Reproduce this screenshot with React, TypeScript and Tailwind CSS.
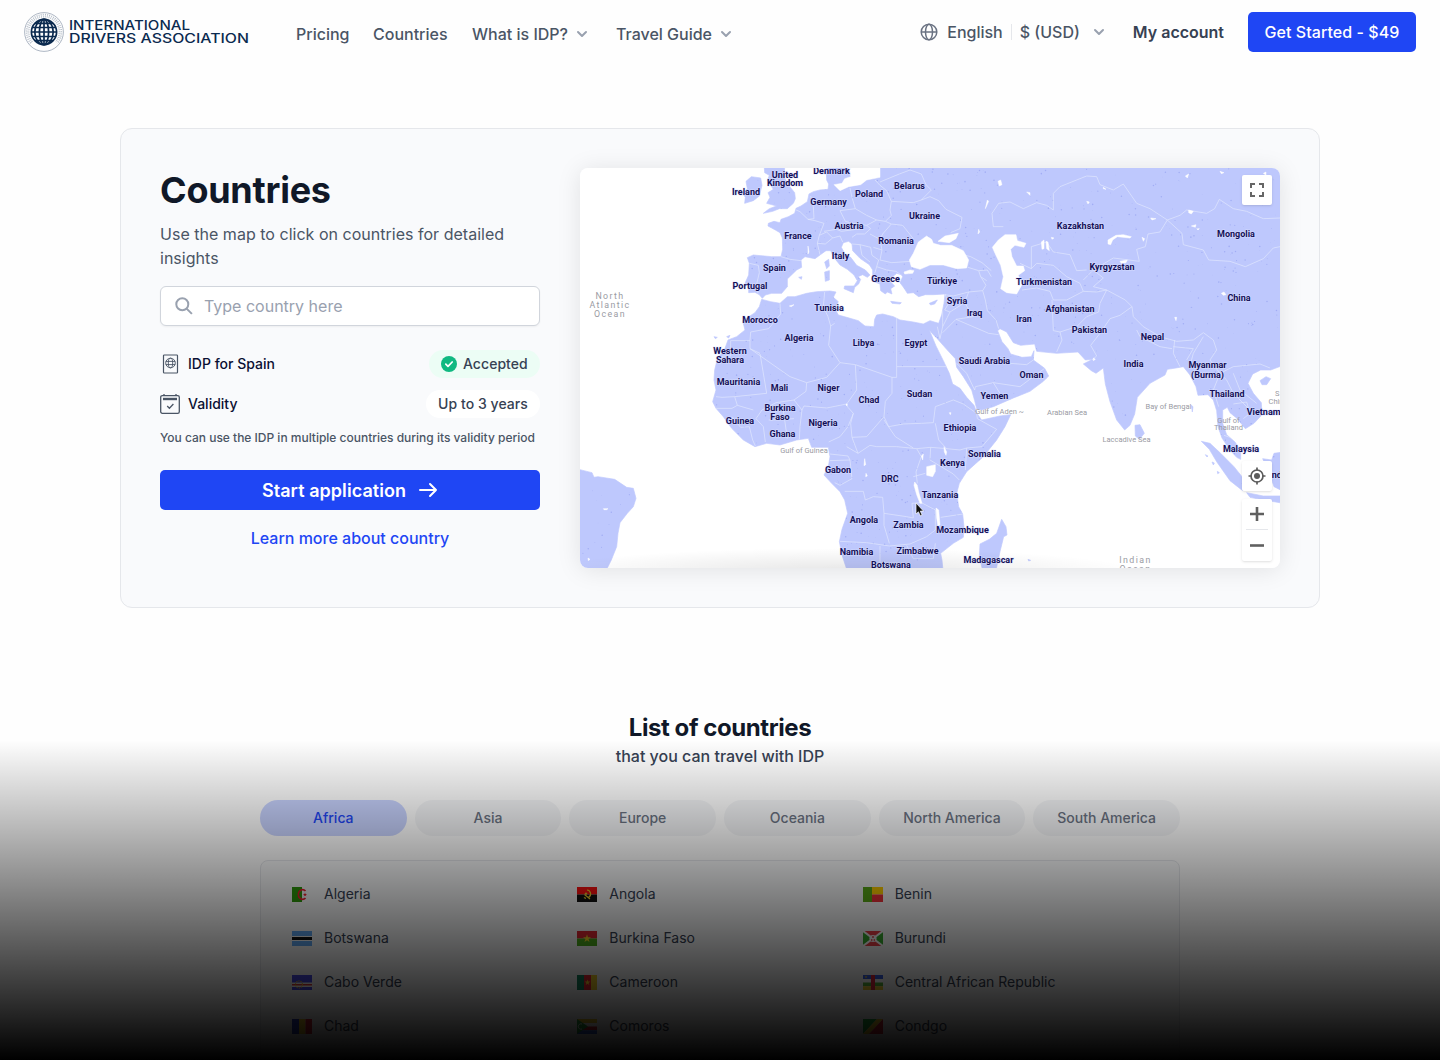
import React from "react";

const LAND = [
  // Eurasia with Africa
  "M378,10 L380,60 386,72 384,88 360,90 340,95 327,102 322,125 303,138 288,145 284,160 265,170 243,178 240,188 222,184 205,190 204,198 226,210 240,218 247,234 248,268 243,290 215,290 160,285 142,293 148,310 146,345 135,370 146,378 146,398 165,397 178,404 187,415 196,405 215,400 245,400 262,380 262,357 290,330 305,322 303,300 315,290 345,296 360,285 378,272 392,272 400,290 420,315 442,328 462,345 472,362 462,378 434,378 432,386 460,398 464,382 476,372 482,358 474,350 488,344 502,352 510,345 496,330 470,316 452,292 436,284 424,262 430,248 446,244 456,252 458,272 480,295 508,314 518,330 518,350 524,366 540,372 542,392 556,402 562,396 576,402 572,386 584,378 570,364 576,352 590,340 604,344 608,350 600,368 612,384 622,400 640,398 656,410 676,404 700,404 735,402 732,430 725,465 716,490 690,482 670,492 640,486 600,480 580,470 548,462 530,465 524,478 522,500 495,498 475,482 440,472 415,465 404,445 415,425 400,412 408,396 390,393 350,395 320,400 285,410 262,410 240,430 212,425 185,418 178,440 165,458 128,482 135,510 110,530 84,540 74,568 52,596 44,630 42,660 48,690 38,725 48,745 70,770 95,805 130,840 165,860 200,850 240,855 290,840 325,835 335,862 385,862 390,890 385,920 372,945 395,970 420,995 434,1020 443,1060 426,1108 418,1145 426,1185 444,1240 730,1240 726,1200 722,1180 760,1150 790,1132 792,1100 788,1062 776,1040 770,1000 778,970 800,935 850,890 890,840 915,800 932,764 900,768 845,780 832,762 822,736 800,712 780,685 758,672 748,640 730,602 708,558 688,510 700,524 712,536 740,568 766,596 770,622 790,650 815,690 824,722 830,746 845,750 880,740 940,714 990,694 1030,664 1046,648 1034,625 1000,600 1002,572 994,590 966,592 932,582 924,566 906,545 893,512 900,506 920,516 940,548 962,556 1004,552 1010,574 1070,580 1134,576 1156,600 1178,598 1150,612 1174,632 1188,640 1210,624 1216,672 1230,725 1250,780 1274,810 1290,796 1304,762 1312,712 1350,670 1395,645 1402,628 1428,624 1450,620 1470,645 1488,680 1494,706 1524,704 1540,720 1550,752 1554,800 1566,834 1590,870 1610,892 1622,898 1622,872 1605,846 1580,824 1568,790 1568,750 1582,742 1590,758 1612,776 1636,806 1662,790 1686,764 1684,728 1660,700 1644,670 1658,642 1682,630 1712,630 1760,612 1760,10 Z",
  // Great Britain and Ireland
  "M192,10 L255,10 252,50 266,76 284,98 286,116 280,130 262,146 238,146 218,154 190,160 208,146 230,138 200,130 210,112 204,98 220,88 212,76 202,62 208,46 194,38 Z",
  "M138,64 L154,50 182,54 186,76 178,108 160,122 134,130 136,112 128,100 142,86 Z",
  // Mediterranean islands
  "M374,306 L386,298 388,318 380,326 Z M374,336 L388,332 388,360 376,364 Z M296,352 L306,350 304,358 Z M572,424 L604,428 600,432 576,430 Z M688,430 L712,420 704,432 692,435 Z",
  // Danish islands
  "M388,52 L402,50 406,66 392,68 Z M410,56 L424,60 416,74 Z",
  // Canary islands
  "M42,530 L52,532 46,536 Z M80,530 L90,526 86,534 Z",
  // Madagascar
  "M905,1078 L918,1100 921,1125 911,1130 900,1175 886,1240 850,1240 838,1190 840,1152 868,1138 890,1120 Z",
  // Sri Lanka
  "M1305,796 L1320,794 1333,820 1318,838 1306,828 Z",
  // Sumatra, Java, Borneo
  "M1504,844 L1530,850 1562,880 1602,920 1626,950 1628,992 1590,962 1550,905 1528,868 Z",
  "M1640,998 L1690,1008 1750,1008 1750,1030 1680,1018 1650,1012 Z",
  "M1688,896 L1715,900 1722,880 1750,876 1750,994 1722,980 1712,950 Z",
  // Hainan and small islands
  "M1680,662 L1698,650 1712,656 1700,674 1686,674 Z",
  "M1516,884 l8,4 -3,3z M1536,906 l7,3 -3,6z M1552,934 l6,4 -5,3z M1474,736 l5,4 -2,16z M984,1198 l8,3 -6,2z",
  // South America
  "M-380,924 L-324,938 -318,952 -306,950 -256,958 -220,982 -200,985 -192,1015 -200,1040 -218,1060 -240,1088 -246,1120 -250,1160 -266,1200 -286,1240 -380,1240 Z",
];

const WATER = [
  // Black Sea, Azov, Marmara
  "M634,320 L628,300 640,280 655,246 680,228 695,238 700,250 722,256 755,256 790,272 806,300 800,324 770,326 730,315 690,315 660,328 Z",
  "M714,244 L735,228 775,220 768,236 748,248 Z M612,336 L630,330 642,332 638,340 614,342 Z",
  // Caspian Sea
  "M885,280 L877,262 895,240 915,224 948,224 952,242 978,250 972,262 945,256 932,268 936,290 950,318 970,318 974,332 955,346 966,374 950,402 920,398 902,386 910,350 902,316 Z",
  // Baltic
  "M432,10 L540,10 540,52 500,60 482,74 446,80 420,92 402,74 426,70 434,56 452,50 450,30 Z",
  // Aral, Balkhash, Issyk-Kul, Zaysan
  "M1024,246 l8,-6 0,26 -6,2z M1038,244 l6,2 4,26 -8,-6z M1054,232 l8,2 -6,4z",
  "M1224,252 L1224,240 1248,226 1270,224 1294,230 1290,234 1252,230 1238,240 1232,254 Z",
  "M1260,304 l22,-4 -4,8 -14,2z M1326,232 l8,4 -4,8z",
  // Lake Victoria, Tanganyika, Malawi, Turkana, Chad
  "M680,920 L706,914 706,934 698,950 680,946 Z",
  "M644,966 l8,10 4,20 10,34 -6,0 -10,-26 -8,-28z M708,1044 l8,6 4,44 -6,6 -4,-26z M732,860 l8,16 -2,10 -5,-10z M664,888 l6,-6 -2,18z M438,732 l4,0 -2,6z M748,758 l5,0 -2,6z",
  // scattered lakes
  "M1466,150 l14,4 -6,8 -8,-4z M1474,198 l14,-4 -2,8z M1564,400 l8,-4 6,8 -8,2z M1490,206 l8,0 -4,4z M1160,124 l8,2 -4,6z M1424,472 l6,0 -2,10z M1690,40 l8,-4 0,10z M1560,34 l12,4 -8,3z M1352,174 l16,2 -12,4z M1180,594 l6,4 -6,4z M862,120 l4,4 -10,22z M894,64 l8,-4 4,14 -8,4z M980,96 l10,2 0,8z M836,208 l3,8 -5,6z M1456,48 l10,-6 -4,12z M1210,82 l8,6 -8,-2z",
  "M-290,1046 l14,0 -4,3 -8,0z M-336,1194 l6,4 -5,4z M498,940 l4,8 -5,2z M494,896 l3,18 -5,3z M324,258 l3,18 -3,6z M268,438 l14,-4 -8,6z",
];

const BORDERS = [
  "M243,290 270,298 303,302 M148,310 175,316 178,338 170,372 174,400",
  "M284,148 300,155 324,178 342,176 340,140 332,108 M324,178 345,182 372,190 358,226 352,250 360,284 M358,226 380,216 398,234 376,252 352,250 M398,234 420,228 428,246 M372,214 410,208 424,214 470,208 490,206",
  "M450,84 456,112 466,146 M420,152 466,146 500,166 530,180 500,196 460,190 436,184 420,152 M500,196 512,206 494,222 470,222 456,232 M530,180 556,184 574,192 548,222 540,238 510,222",
  "M525,60 540,76 560,92 574,124 570,150 574,166 556,184 M540,66 598,42 630,30 664,42 678,74 694,90 664,120 640,128 574,124 M664,120 690,110 716,122 738,148 786,172 780,206 752,218",
  "M540,238 546,270 540,300 575,308 632,304 M574,192 608,196 640,236 M456,252 480,254 512,262 516,286 M480,254 486,286 510,306 M516,286 536,300 530,320 524,340 M530,320 560,330 588,334 602,344 M546,270 520,262",
  "M804,322 836,332 842,350 858,376 848,392 806,396 760,408 735,404 M772,280 812,290 846,308 874,332 M836,332 862,330 874,350 M842,350 860,362 M848,392 856,420 862,452 888,480 896,506",
  "M735,402 746,430 734,450 750,456 728,500 M806,396 794,428 750,456 M794,428 820,470 768,478 728,518 M768,478 810,496 866,520 896,524 M728,450 728,500",
  "M712,500 720,536 728,500 M590,472 590,620 745,620 M590,620 590,652 576,652 M240,430 242,462 206,506 152,516 150,542 92,542 M150,542 150,566 270,650 320,668 380,652 420,608 386,556 392,498 384,470 370,440 374,396",
  "M92,542 92,588 68,588 60,612 M180,580 200,700 104,710 M180,580 150,566 M320,668 318,694 282,720 228,728 186,750 168,776 M104,710 66,712 48,710 M104,710 112,736 160,750 M48,745 96,745 112,736 M96,770 122,802 148,800 158,840 166,858 M168,776 190,800 196,846",
  "M404,490 392,498 M420,608 466,614 576,652 576,700 556,724 552,770 566,800 610,792 664,790 700,788 M466,614 470,690 440,732 444,742 M282,720 306,750 312,738 380,744 440,732 M306,750 300,800 298,838 M250,752 262,836 M206,780 220,780 282,776",
  "M444,742 460,760 444,800 420,830 386,846 M460,760 452,790 456,832 500,830 552,770 M456,832 474,880 510,856 530,860 590,860 650,866 M552,780 586,830 640,864 M440,860 474,880 M390,882 444,888 450,900 390,902 M450,900 456,956 420,976 404,968",
  "M700,788 706,740 760,720 790,732 830,760 832,776 890,808 846,860 800,864 780,870 740,866 716,840 706,790 M650,866 692,862 740,866 M800,864 796,930 M692,862 690,900 760,942 778,960 M650,866 664,890 648,936 652,970 M640,950 676,940",
  "M434,994 490,994 496,1020 520,1010 548,1012 552,1060 620,1070 640,1074 636,1030 664,1028 M552,1060 552,1096 568,1150 M420,1144 500,1148 568,1158 630,1152 680,1130 706,1110 706,1050 664,1028 M540,1158 540,1210 516,1216 M620,1156 640,1196 700,1196 706,1150 M722,1072 790,1062",
  "M896,130 876,160 880,200 910,200 M896,130 930,126 970,146 1010,128 1040,136 1060,150 1060,100 1080,80 1160,48 1190,50 1200,74 1240,90 1270,72 1310,130 1350,146 1402,180 M1402,180 1440,166 1460,150 1520,160 1544,146 1558,118 1600,146 1640,154 1690,176 1740,174",
  "M1402,180 1446,220 1450,254 1510,270 1526,300 1590,304 1636,320 1690,296 1720,264 1740,260 M1402,180 1380,216 1344,222 1336,260 1310,268 1318,304 1240,294 1180,330 1150,360 M994,260 994,326 960,310 M994,260 1040,246 1060,276 1110,284 1130,332 1160,330 M994,326 1010,310 1060,316 1100,350 1140,370 1150,394",
  "M966,390 1010,384 1050,394 1060,420 1100,420 1150,394 1190,396 1220,390 1200,430 1196,456 1160,470 1130,500 1080,516 1060,512 1056,420 M1080,516 1086,540 1070,576 M1180,330 1210,354 1180,380 1220,390 1276,420 1296,440 1260,466 1230,476 1200,520 1172,556 1190,588 1176,600",
  "M1296,440 1300,470 1330,500 1380,530 1430,544 1480,540 1510,518 1540,540 1550,570 M1310,510 1320,530 1380,560 1416,566 M1424,540 1420,580 1440,620 M1420,560 1480,566 1460,600 M1510,530 1480,580 1472,610 M1550,570 1530,600 1560,640 1600,620 1640,616 1680,612 1710,624",
  "M1560,640 1580,660 1600,700 1650,750 M1600,640 1620,690 1670,730 M1560,640 1540,690 1556,740 M1600,732 1640,726 1650,760 1630,776 M1572,826 1590,832 M770,610 800,640 824,690 826,680 880,668 960,680 M880,668 900,700 M960,680 1000,650 1034,625 M930,610 980,614 1000,600",
];

type Place = [string, number, number];

const COUNTRY_LABELS: Place[] = [
  ["United", 785, 175], ["Kingdom", 785, 183.5], ["Denmark", 831.5, 171], ["Ireland", 746, 192.5],
  ["Germany", 828.5, 202.5], ["Poland", 869, 194], ["Belarus", 909.5, 186], ["Ukraine", 924.5, 216.5],
  ["Austria", 849, 226.5], ["France", 798, 236.5], ["Romania", 896, 241.5], ["Italy", 840.5, 256],
  ["Spain", 774.5, 268], ["Portugal", 750, 286], ["Greece", 885.5, 279.5], ["Türkiye", 942, 281],
  ["Syria", 957, 301], ["Iraq", 974.5, 313.5], ["Iran", 1024, 319], ["Tunisia", 829, 308.5],
  ["Morocco", 760, 320], ["Algeria", 799, 338], ["Libya", 863.5, 343], ["Egypt", 916, 343],
  ["Western", 730, 351], ["Sahara", 730, 360.5], ["Saudi Arabia", 984.5, 361], ["Oman", 1031.5, 375.5],
  ["Mauritania", 738.5, 382.5], ["Mali", 779.5, 388], ["Niger", 828.5, 388.5], ["Chad", 869, 400.5],
  ["Sudan", 919.5, 394.5], ["Yemen", 994.5, 396.5], ["Burkina", 780, 408.5], ["Faso", 780, 417.5],
  ["Guinea", 740, 421], ["Ghana", 782.5, 434.5], ["Nigeria", 823, 423.5], ["Ethiopia", 960, 428],
  ["Somalia", 984.5, 454.5], ["Kenya", 952.5, 463.5], ["Gabon", 838, 470], ["DRC", 890, 479],
  ["Tanzania", 940, 495], ["Angola", 864, 520], ["Zambia", 908.5, 525.5], ["Mozambique", 962.5, 530.5],
  ["Namibia", 856.5, 552.5], ["Zimbabwe", 917.5, 551], ["Botswana", 891, 565.5], ["Madagascar", 988.5, 560.5],
  ["Kazakhstan", 1080.5, 226.5], ["Mongolia", 1236, 234.5], ["Kyrgyzstan", 1112, 267],
  ["Turkmenistan", 1044, 282], ["China", 1239, 298.5], ["Afghanistan", 1070, 309.5],
  ["Pakistan", 1089.5, 330], ["Nepal", 1152.5, 337.5], ["India", 1133.5, 364.5],
  ["Myanmar", 1207.5, 365.5], ["(Burma)", 1207.5, 375], ["Thailand", 1227, 394], ["Malaysia", 1241, 449],
];

const SEA_LABELS: Place[] = [
  ["Gulf of Guinea", 804, 450.5], ["Gulf of Aden ~", 999.5, 411.5], ["Arabian Sea", 1067, 412.5],
  ["Laccadive Sea", 1126.5, 439], ["Bay of Bengal", 1168.5, 406], ["Gulf of", 1228.5, 420.5],
  ["Thailand", 1228.5, 427.5],
];

const OCEAN_LABELS: Place[] = [
  ["North", 610, 296], ["Atlantic", 610, 305], ["Ocean", 610, 314],
  ["Indian", 1135.5, 560], ["Ocean", 1135.5, 568.5],
];

const fract = (n: number) => n - Math.floor(n);

const SPECKS = Array.from({ length: 1500 }, (_, i) => ({
  x: -360 + fract(Math.sin(i * 12.9898 + 1) * 43758.5453) * 2100,
  y: 24 + fract(Math.sin(i * 78.233 + 2) * 12543.1234) * 1180,
  r: 0.8 + (i % 4) * 0.5,
}));

function WorldMap() {
  return (
    <svg viewBox="580 168 700 400" className="block h-full w-full" fontFamily="Roboto, sans-serif" textAnchor="middle">
      <defs>
        <clipPath id="land">
          {LAND.map((d) => (
            <path key={d} d={d} />
          ))}
        </clipPath>
        <radialGradient id="haze">
          <stop offset="0" stopColor="#000" stopOpacity="0.1" />
          <stop offset="0.6" stopColor="#000" stopOpacity="0.04" />
          <stop offset="1" stopColor="#000" stopOpacity="0" />
        </radialGradient>
      </defs>
      <g transform="translate(700 160) scale(0.333333)">
        <g fill="#bfc9fd" stroke="#bfc9fd" strokeWidth="2" strokeLinejoin="round">
          {LAND.map((d) => (
            <path key={d} d={d} />
          ))}
        </g>
        <g clipPath="url(#land)">
          <g fill="#8f9cf0" opacity="0.6">
            {SPECKS.map((s, i) => (
              <circle key={i} cx={s.x} cy={s.y} r={s.r} />
            ))}
          </g>
          <g fill="none" stroke="#e3e8fd" strokeWidth="2" strokeLinejoin="round">
            {BORDERS.map((d) => (
              <path key={d} d={d} />
            ))}
          </g>
        </g>
        <g fill="#fff" stroke="#fff" strokeWidth="1.5" strokeLinejoin="round">
          {WATER.map((d) => (
            <path key={d} d={d} />
          ))}
        </g>
      </g>
      <ellipse cx="840" cy="572" rx="300" ry="24" fill="url(#haze)" />
      <g fill="#9a9ba3">
        {SEA_LABELS.map(([t, x, y]) => (
          <text key={t} x={x} y={y + 2.5} fontSize="7.5">{t}</text>
        ))}
        {OCEAN_LABELS.map(([t, x, y]) => (
          <text key={t + y} x={x} y={y + 3.2} fontSize="8.8" letterSpacing="1.4">{t}</text>
        ))}
        <text x="1275" y="396" textAnchor="start" fontSize="7.5">S</text>
        <text x="1268.5" y="404" textAnchor="start" fontSize="7.5">China</text>
      </g>
      <g fontSize="9" fontWeight="700" fill="#130f57" stroke="#dfe4ff" strokeWidth="1.2" strokeOpacity="0.7" paintOrder="stroke">
        {COUNTRY_LABELS.map(([t, x, y]) => (
          <text key={t} x={x} y={y + 2.8}>{t}</text>
        ))}
        <text x="1246.7" y="414.5" textAnchor="start">Vietnam</text>
        <text x="1269" y="478" textAnchor="start">Indonesia</text>
      </g>
      <path d="M916,503 v11 l2.4,-2.2 1.9,4 1.8,-0.8 -1.8,-3.9 h3.2z" fill="#111" stroke="#fff" strokeWidth="0.7" />
    </svg>
  );
}

function Chevron({ className = "" }: { className?: string }) {
  return (
    <svg viewBox="0 0 20 20" fill="currentColor" className={"h-5 w-5 text-gray-400 " + className}>
      <path fillRule="evenodd" clipRule="evenodd" d="M5.293 7.293a1 1 0 011.414 0L10 10.586l3.293-3.293a1 1 0 111.414 1.414l-4 4a1 1 0 01-1.414 0l-4-4a1 1 0 010-1.414z" />
    </svg>
  );
}

function Logo() {
  return (
    <div className="flex h-10 w-[226px] items-center text-[#0b2a4f]">
      <svg viewBox="0 0 40 40" className="h-10 w-10 shrink-0" fill="none">
        <circle cx="20" cy="20" r="19.4" stroke="#8b98aa" strokeWidth="0.7" />
        <path d="M7.5 30.600A16.400 16.400 0 1 1 32.500 30.600" stroke="#8b98aa" strokeWidth="3.600" strokeDasharray="0.900 1.100" opacity="0.65" />
        <path d="M7.500 30.600A16.400 16.400 0 1 1 32.500 30.600" stroke="#fff" strokeWidth="0.600" strokeDasharray="3 1" opacity="0.8" />
        <g stroke="#0b2a4f" strokeWidth="1.7">
          <circle cx="20" cy="20" r="12.6" fill="#fff" />
          <ellipse cx="20" cy="20" rx="4.600" ry="12.600" />
          <ellipse cx="20" cy="20" rx="9.200" ry="12.600" />
          <path d="M20 7.500v25M7.500 20h25M8.500 15.500h23M8.500 24.500h23M11 11.300h18M11 28.700h18" />
        </g>
      </svg>
      <svg viewBox="0 0 182 28" className="ml-1 h-7 w-[182px]" fill="currentColor" fontFamily="Inter, sans-serif" fontWeight="500" fontSize="12.700">
        <text x="1" y="12.200" textLength="121" lengthAdjust="spacingAndGlyphs">INTERNATIONAL</text>
        <text x="1" y="25" textLength="180" lengthAdjust="spacingAndGlyphs">DRIVERS ASSOCIATION</text>
      </svg>
    </div>
  );
}

function Header() {
  return (
    <header className="flex h-16 items-center px-6">
      <Logo />
      <nav className="mt-1 ml-[46px] flex items-center text-base font-medium text-gray-600">
        <a className="w-[77px]">Pricing</a>
        <a className="w-[99px]">Countries</a>
        <a className="flex w-[144px] items-center whitespace-nowrap">What is IDP?<Chevron className="ml-1" /></a>
        <a className="flex items-center whitespace-nowrap">Travel Guide<Chevron className="ml-1" /></a>
      </nav>
      <div className="ml-auto flex items-center text-base">
        <svg viewBox="0 0 18 18" className="mr-[9px] h-[18px] w-[18px] text-gray-500" fill="none" stroke="currentColor" strokeWidth="1.5">
          <circle cx="9" cy="9" r="7.8" />
          <ellipse cx="9" cy="9" rx="3.5" ry="7.8" />
          <path d="M1.2 9h15.6" />
        </svg>
        <span className="font-medium text-gray-600">English</span>
        <span className="mx-2 h-4 w-px bg-gray-200" />
        <span className="font-medium text-gray-600">$ (USD)</span>
        <Chevron className="ml-[9px]" />
        <a className="ml-6 font-semibold text-gray-700">My account</a>
        <button className="ml-6 h-10 w-[168px] rounded-[5px] bg-[#1f46f4] font-medium tracking-[0.06px] text-white">Get Started - $49</button>
      </div>
    </header>
  );
}

function SearchPanel() {
  return (
    <div className="w-[380px] shrink-0">
      <h1 className="h-[46px] text-[36px] leading-[45px] font-bold tracking-[-0.25px] text-gray-900">Countries</h1>
      <p className="mt-2 text-base leading-6 tracking-[0.02px] text-gray-600">Use the map to click on countries for detailed insights</p>
      <div className="mt-4 flex h-10 items-center rounded-md border border-gray-300 bg-white pl-[14px] shadow-xs">
        <svg viewBox="0 0 18 18" className="h-[18px] w-[18px] text-gray-400" fill="none" stroke="currentColor" strokeWidth="2">
          <circle cx="7.3" cy="7.3" r="6" />
          <path d="M11.6 11.6l5.3 5.3" />
        </svg>
        <span className="ml-[11px] text-base text-gray-400">Type country here</span>
      </div>
      <div className="mt-6 flex h-7 items-center text-sm font-medium text-[#0b1033]">
        <svg viewBox="0 0 20 20" className="mr-2 h-5 w-5 text-gray-600" fill="none" stroke="currentColor">
          <rect x="3.5" y="1" width="14" height="18" rx="0.8" strokeWidth="1.2" />
          <g strokeWidth="0.9">
            <circle cx="10.5" cy="9" r="4.8" />
            <ellipse cx="10.5" cy="9" rx="2.2" ry="4.8" />
            <path d="M5.8 7.4h9.4M5.8 10.6h9.4" />
          </g>
        </svg>
        IDP for Spain
        <span className="ml-auto flex h-7 w-[111px] items-center rounded-full bg-emerald-50 pl-3 text-sm tracking-[0.05px] text-gray-700">
          <svg viewBox="0 0 16 16" className="mr-1.5 h-4 w-4" fill="none">
            <circle cx="8" cy="8" r="8" fill="#10b981" />
            <path d="M4.8 8.2l2.2 2.2 4.2-4.4" stroke="#fff" strokeWidth="1.7" strokeLinecap="round" strokeLinejoin="round" />
          </svg>
          Accepted
        </span>
      </div>
      <div className="mt-3 flex h-7 items-center text-sm font-medium text-[#0b1033]">
        <svg viewBox="0 0 20 20" className="mr-2 h-5 w-5 text-gray-600" fill="none" stroke="currentColor" strokeWidth="1.3">
          <rect x="0.7" y="1.6" width="18.6" height="17.7" rx="1.6" />
          <path d="M4 0v1.6M16 0v1.6" />
          <path d="M3 5h14" strokeWidth="2.4" />
          <path d="M7.2 12l2.200 2.200 4-4.200" />
        </svg>
        Validity
        <span className="ml-auto flex h-7 w-[114px] items-center justify-center rounded-full bg-white text-sm tracking-[0.05px] text-gray-700">Up to 3 years</span>
      </div>
      <p className="mt-3 text-xs leading-4 font-medium tracking-[-0.01px] whitespace-nowrap text-gray-600">You can use the IDP in multiple countries during its validity period</p>
      <button className="mt-6 flex h-10 w-full items-center justify-center rounded-[5px] bg-[#1f46f4] pt-px text-lg font-semibold tracking-[0.06px] text-white">
        Start application
        <svg viewBox="0 0 20 16" className="mb-px ml-3 h-4 w-5" fill="none" stroke="currentColor" strokeWidth="2" strokeLinecap="round" strokeLinejoin="round">
          <path d="M2 8h16M12 2l6 6-6 6" />
        </svg>
      </button>
      <a className="mt-4 block text-center text-base leading-6 font-medium text-[#1f46f4]">Learn more about country</a>
    </div>
  );
}

function MapPanel() {
  return (
    <div className="relative h-[400px] w-[700px] overflow-hidden rounded-lg bg-white">
      <WorldMap />
      <div className="absolute top-[7px] right-2 flex h-[30px] w-[30px] items-center justify-center rounded-[2px] bg-white shadow">
        <svg viewBox="0 0 14 14" className="h-[14px] w-[14px]" fill="none" stroke="#666" strokeWidth="2">
          <path d="M1 5V1h4M9 1h4v4M13 9v4H9M5 13H1V9" />
        </svg>
      </div>
      <div className="absolute top-[293px] right-2 flex h-[30px] w-[30px] items-center justify-center rounded-[2px] bg-white shadow">
        <svg viewBox="0 0 18 18" className="h-[18px] w-[18px]" fill="none" stroke="#5b5b5b" strokeWidth="1.7">
          <circle cx="9" cy="9" r="6" />
          <circle cx="9" cy="9" r="3" fill="#5b5b5b" stroke="none" />
          <path d="M9 0.5v3M9 14.5v3M0.5 9h3M14.5 9h3" />
        </svg>
      </div>
      <div className="absolute top-[331px] right-2 flex h-[62px] w-[30px] flex-col items-center rounded-[2px] bg-white shadow">
        <svg viewBox="0 0 30 30" className="h-[30px] w-[30px]" stroke="#606060" strokeWidth="2.6"><path d="M8 15h14M15 8v14" /></svg>
        <span className="h-px w-[22px] bg-gray-200" />
        <svg viewBox="0 0 30 30" className="h-[30px] w-[30px]" stroke="#606060" strokeWidth="2.6"><path d="M8 15.5h14" /></svg>
      </div>
    </div>
  );
}

const REGIONS = ["Africa", "Asia", "Europe", "Oceania", "North America", "South America"];

const STAR = "M0,-3 .7,-.9 2.9,-.9 1.1,.4 1.8,2.5 0,1.2 -1.8,2.5 -1.1,.4 -2.9,-.9 -.7,-.9z";

const COUNTRIES: { name: string; flag: React.ReactNode }[] = [
  { name: "Algeria", flag: <><path fill="#2f9a0c" d="M0 0h10v15H0z" /><path d="M13.5 4A4.2 4.8 0 1 0 13.5 11" fill="none" stroke="#f0202c" strokeWidth="1.7" /><path d={STAR} transform="translate(13 7.6) scale(.7)" fill="#f0202c" /></> },
  { name: "Angola", flag: <><path fill="#ff1010" d="M0 0h20v7.5H0z" /><path fill="#111" d="M0 7.5h20V15H0z" /><path d="M10 3a4 4 0 0 1 1.500 7.500M7 10.500a4 4 0 0 0 2 .8M7.500 7.500l5.500 4.500" fill="none" stroke="#f6d72c" strokeWidth="1.2" /><path d={STAR} transform="translate(9 6.500) scale(.6)" fill="#f6d72c" /></> },
  { name: "Benin", flag: <><path fill="#5aaa18" d="M0 0h9v15H0z" /><path fill="#ffce00" d="M9 0h11v7.5H9z" /><path fill="#f0333a" d="M9 7.5h11V15H9z" /></> },
  { name: "Botswana", flag: <><path fill="#62a9f5" d="M0 0h20v15H0z" /><path fill="#fff" d="M0 5h20v5H0z" /><path fill="#111" d="M0 6h20v3H0z" /></> },
  { name: "Burkina Faso", flag: <><path fill="#e02833" d="M0 0h20v7.5H0z" /><path fill="#4cae1b" d="M0 7.5h20V15H0z" /><path d={STAR} transform="translate(10 7.5) scale(1.4)" fill="#f9d625" /></> },
  { name: "Burundi", flag: <><path fill="#f04048" d="M0 0h20v15H0z" /><path fill="#39ad30" d="M0 0l10 7.5L0 15zM20 0L10 7.5 20 15z" /><path d="M0 0l20 15M20 0L0 15" stroke="#fff" strokeWidth="2" /><circle cx="10" cy="7.5" r="3.6" fill="#fff" /><path d="M10 5v2M8 9h1.4M10.7 9H12" stroke="#e6333c" strokeWidth="1.3" /></> },
  { name: "Cabo Verde", flag: <><path fill="#4a4bea" d="M0 0h20v15H0z" /><path fill="#fff" d="M0 7.5h20v4.5H0z" /><path fill="#e03c38" d="M0 9h20v1.5H0z" /><circle cx="7" cy="9.5" r="3.5" fill="none" stroke="#f4c62e" strokeWidth="1.1" strokeDasharray="1.3 .9" /></> },
  { name: "Cameroon", flag: <><path fill="#13855f" d="M0 0h7v15H0z" /><path fill="#ec2430" d="M7 0h7v15H7z" /><path fill="#efcd27" d="M14 0h6v15h-6z" /><path d={STAR} transform="translate(10.5 7.5)" fill="#f9d625" /></> },
  { name: "Central African Republic", flag: <><path fill="#3862e9" d="M0 0h20v4H0z" /><path fill="#fff" d="M0 4h20v3.5H0z" /><path fill="#58b239" d="M0 7.5h20v3.7H0z" /><path fill="#f1ca2c" d="M0 11.2h20V15H0z" /><path fill="#e3253b" d="M8 0h4v15H8z" /><path d={STAR} transform="translate(3 2) scale(.5)" fill="#f1ca2c" /></> },
  { name: "Chad", flag: <><path fill="#2d40c0" d="M0 0h7v15H0z" /><path fill="#f5cd28" d="M7 0h6.5v15H7z" /><path fill="#e22334" d="M13.5 0H20v15h-6.5z" /></> },
  { name: "Comoros", flag: <><path fill="#f5cd28" d="M0 0h20v4H0z" /><path fill="#fff" d="M0 4h20v3.5H0z" /><path fill="#e22334" d="M0 7.5h20v3.7H0z" /><path fill="#3565e0" d="M0 11.2h20V15H0z" /><path fill="#29a443" d="M0 0l11 7.5L0 15z" /><path d="M5 5a2.7 2.7 0 1 0 0 5" fill="none" stroke="#fff" /></> },
  { name: "Condgo", flag: <><path fill="#23ab3c" d="M0 0h14L0 15z" /><path fill="#f5cd28" d="M14 0h6L6 15H0z" /><path fill="#e22334" d="M20 0v15H6z" /></> },
];

function CountryList() {
  return (
    <section className="relative mt-[104px] flex h-[348px] flex-col items-center overflow-hidden">
      <h2 className="text-2xl leading-8 font-bold tracking-[-0.42px] text-gray-900">List of countries</h2>
      <p className="text-base leading-6 font-medium text-gray-700">that you can travel with IDP</p>
      <div className="mt-8 grid w-[920px] grid-cols-6 gap-2 text-sm font-medium text-gray-500">
        {REGIONS.map((name, i) => (
          <button key={name} className={i === 0 ? "h-9 rounded-full bg-[#c7d2fe] text-[#1f46f4]" : "h-9 rounded-full bg-gray-100"}>
            {name}
          </button>
        ))}
      </div>
      <div className="mt-6 grid h-[260px] w-[920px] shrink-0 grid-cols-3 content-start gap-y-6 rounded-t-lg border border-gray-200 bg-gray-50 px-[31px] pt-[23px]">
        {COUNTRIES.map(({ name, flag }) => (
          <div key={name} className="flex h-5 items-center text-sm text-gray-700">
            <svg viewBox="0 0 20 15" preserveAspectRatio="none" className="mr-3 h-[15px] w-5">{flag}</svg>
            {name}
          </div>
        ))}
      </div>
      <div className="absolute inset-x-0 top-[28px] bottom-0 bg-linear-to-b from-black/0 to-black" />
    </section>
  );
}

export default function App() {
  return (
    <div className="h-[1060px] overflow-hidden bg-[#fefefe] font-['Inter',sans-serif]">
      <Header />
      <main>
        <section className="mx-auto mt-16 flex h-[480px] w-[1200px] gap-10 rounded-xl border border-gray-200 bg-[#f9fafc] p-[39px]">
          <SearchPanel />
          <div className="h-[400px] rounded-lg shadow-[0_2px_24px_rgba(0,0,0,0.10)]">
            <MapPanel />
          </div>
        </section>
        <CountryList />
      </main>
    </div>
  );
}
